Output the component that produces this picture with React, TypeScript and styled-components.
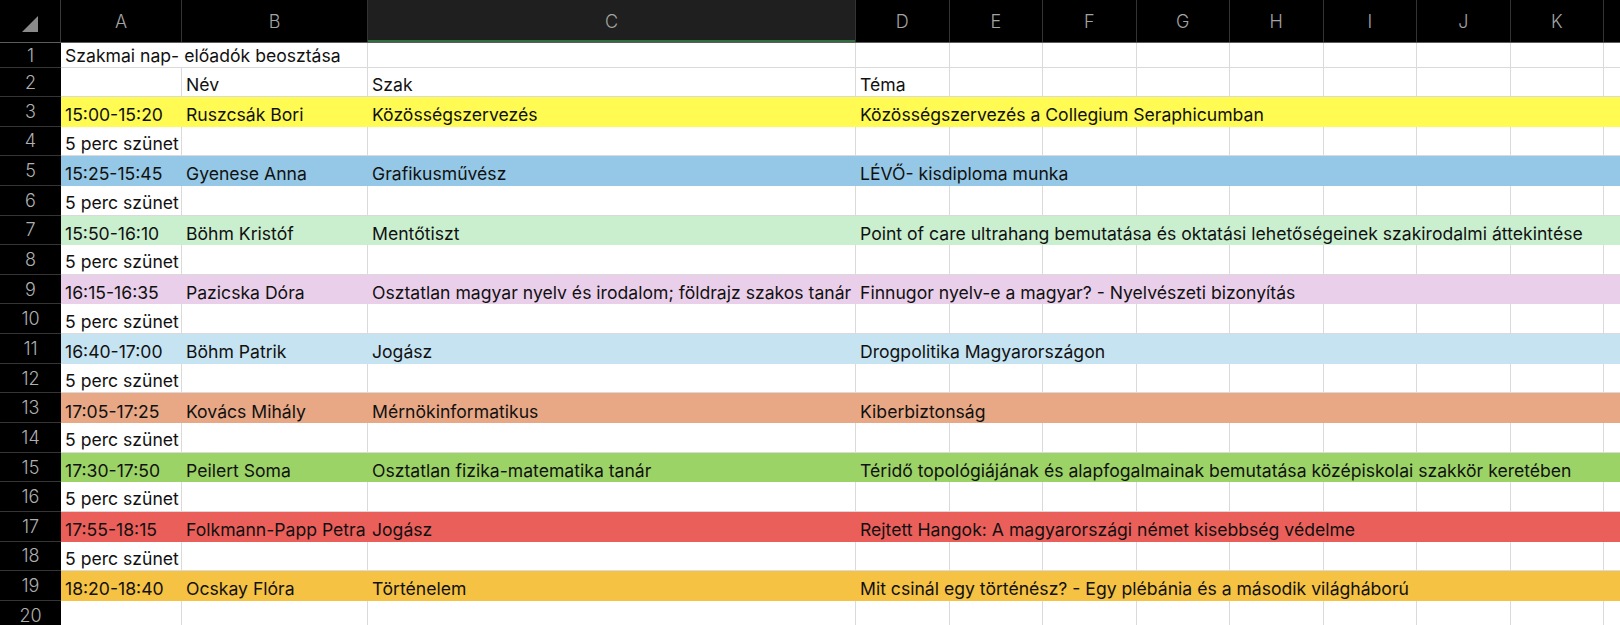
import React from 'react';
import styled, { createGlobalStyle } from 'styled-components';

const GlobalStyle = createGlobalStyle`
  html, body {
    margin: 0;
    padding: 0;
    background: #ffffff;
    overflow: hidden;
  }
  body {
    font-family: Inter, "Liberation Sans", sans-serif;
  }
`;

const COLS = '61px 121px 186px 488px repeat(9, 93.5px)';
// L is only a sliver at the right edge, its letter is off screen
const HEAD = ['A', 'B', 'C', 'D', 'E', 'F', 'G', 'H', 'I', 'J', 'K', ''];

type Cell = { text?: string; span?: number };
type SheetRow = { n: number; cells: Cell[]; fill?: string; height?: number };

const BREAK: Cell[] = [{ text: '5 perc szünet' }, {}, {}, {}];

const rows: SheetRow[] = [
  { n: 1, cells: [{ text: 'Szakmai nap- előadók beosztása', span: 2 }, {}, {}], height: 25 },
  { n: 2, cells: [{}, { text: 'Név' }, { text: 'Szak' }, { text: 'Téma' }], height: 29 },
  {
    n: 3,
    fill: '#fffb52',
    cells: [{ text: '15:00-15:20' }, { text: 'Ruszcsák Bori' }, { text: 'Közösségszervezés' }, { text: 'Közösségszervezés a Collegium Seraphicumban' }],
  },
  { n: 4, cells: BREAK },
  {
    n: 5,
    fill: '#94c8e6',
    cells: [{ text: '15:25-15:45' }, { text: 'Gyenese Anna' }, { text: 'Grafikusművész' }, { text: 'LÉVŐ- kisdiploma munka' }],
  },
  { n: 6, cells: BREAK },
  {
    n: 7,
    fill: '#c9efcf',
    cells: [
      { text: '15:50-16:10' },
      { text: 'Böhm Kristóf' },
      { text: 'Mentőtiszt' },
      { text: 'Point of care ultrahang bemutatása és oktatási lehetőségeinek szakirodalmi áttekintése' },
    ],
  },
  { n: 8, cells: BREAK },
  {
    n: 9,
    fill: '#eacfeb',
    cells: [
      { text: '16:15-16:35' },
      { text: 'Pazicska Dóra' },
      { text: 'Osztatlan magyar nyelv és irodalom; földrajz szakos tanár' },
      { text: 'Finnugor nyelv-e a magyar? - Nyelvészeti bizonyítás' },
    ],
  },
  { n: 10, cells: BREAK },
  {
    n: 11,
    fill: '#c6e3f2',
    cells: [{ text: '16:40-17:00' }, { text: 'Böhm Patrik' }, { text: 'Jogász' }, { text: 'Drogpolitika Magyarországon' }],
  },
  { n: 12, cells: BREAK },
  {
    n: 13,
    fill: '#e8a886',
    cells: [{ text: '17:05-17:25' }, { text: 'Kovács Mihály' }, { text: 'Mérnökinformatikus' }, { text: 'Kiberbiztonság' }],
  },
  { n: 14, cells: BREAK },
  {
    n: 15,
    fill: '#9cd366',
    cells: [
      { text: '17:30-17:50' },
      { text: 'Peilert Soma' },
      { text: 'Osztatlan fizika-matematika tanár' },
      { text: 'Téridő topológiájának és alapfogalmainak bemutatása középiskolai szakkör keretében' },
    ],
  },
  { n: 16, cells: BREAK },
  {
    n: 17,
    fill: '#eb5f5a',
    cells: [
      { text: '17:55-18:15' },
      { text: 'Folkmann-Papp Petra' },
      { text: 'Jogász' },
      { text: 'Rejtett Hangok: A magyarországi német kisebbség védelme' },
    ],
  },
  { n: 18, cells: BREAK },
  {
    n: 19,
    fill: '#f5c244',
    cells: [
      { text: '18:20-18:40' },
      { text: 'Ocskay Flóra' },
      { text: 'Történelem' },
      { text: 'Mit csinál egy történész? - Egy plébánia és a második világháború' },
    ],
  },
  { n: 20, cells: [{}, {}, {}, {}] },
];

const Sheet = styled.div`
  width: 1620px;
  height: 625px;
  overflow: hidden;
  background: #ffffff;
  font-size: 17.6px;
  color: #111111;
`;

const HeaderRow = styled.div`
  display: grid;
  grid-template-columns: ${COLS};
  height: 43px;
  background: #000000;
  border-bottom: 1px solid #5c5c5c;
  box-sizing: border-box;
`;

const Corner = styled.div`
  display: flex;
  align-items: flex-end;
  justify-content: flex-end;
  padding: 0 22px 10px 0;
  border-right: 1px solid #3a3a3a;
`;

const ColHead = styled.div<{ $active?: boolean }>`
  display: flex;
  align-items: center;
  justify-content: center;
  color: #a3a3a3;
  font-size: 18px;
  font-weight: 300;
  border-right: 1px solid #333333;
  background: ${(p) => (p.$active ? '#1f1f1f' : '#000000')};
  box-shadow: ${(p) => (p.$active ? 'inset 0 -2px 0 #2f6e3e' : 'none')};
`;

const Row = styled.div<{ $h: number; $fill?: string }>`
  display: grid;
  grid-template-columns: ${COLS};
  height: ${(p) => p.$h}px;
  background: ${(p) => p.$fill || '#ffffff'};
`;

const RowHead = styled.div`
  display: flex;
  align-items: center;
  justify-content: center;
  background: #000000;
  color: #b0b0b0;
  font-size: 18px;
  font-weight: 300;
  border-bottom: 1px solid #353535;
  box-sizing: border-box;
`;

const CellBox = styled.div<{ $span?: number; $plain?: boolean }>`
  grid-column: ${(p) => (p.$span ? `span ${p.$span}` : 'auto')};
  display: flex;
  align-items: flex-end;
  padding: 0 0 1.5px 4px;
  line-height: 20px;
  white-space: nowrap;
  overflow: hidden;
  box-sizing: border-box;
  border-right: ${(p) => (p.$plain ? 'none' : '1px solid #dadada')};
  border-bottom: ${(p) => (p.$plain ? 'none' : '1px solid #dadada')};
`;

const WideCell = styled(CellBox)`
  grid-column: 5 / -1;
`;

const CornerMark = () => (
  <svg width="16" height="16" viewBox="0 0 16 16">
    <polygon points="16,0 16,16 0,16" fill="#8a8a8a" />
  </svg>
);

const SheetRowView = ({ row }: { row: SheetRow }) => {
  const h = row.height ?? 29.65;
  if (row.fill) {
    const [a, b, c, d] = row.cells;
    return (
      <Row $h={h} $fill={row.fill}>
        <RowHead>{row.n}</RowHead>
        <CellBox $plain>{a.text}</CellBox>
        <CellBox $plain>{b.text}</CellBox>
        <CellBox $plain>{c.text}</CellBox>
        <WideCell $plain>{d.text}</WideCell>
      </Row>
    );
  }
  const cells: Cell[] = [...row.cells];
  let used = cells.reduce((s, c) => s + (c.span ?? 1), 0);
  while (used < 12) {
    cells.push({});
    used++;
  }
  return (
    <Row $h={h}>
      <RowHead>{row.n}</RowHead>
      {cells.map((c, i) => (
        <CellBox key={i} $span={c.span}>
          {c.text}
        </CellBox>
      ))}
    </Row>
  );
};

export default function App() {
  return (
    <>
      <GlobalStyle />
      <Sheet>
        <HeaderRow>
          <Corner>
            <CornerMark />
          </Corner>
          {HEAD.map((l, i) => (
            <ColHead key={i} $active={l === 'C'}>
              {l}
            </ColHead>
          ))}
        </HeaderRow>
        {rows.map((r) => (
          <SheetRowView key={r.n} row={r} />
        ))}
      </Sheet>
    </>
  );
}
